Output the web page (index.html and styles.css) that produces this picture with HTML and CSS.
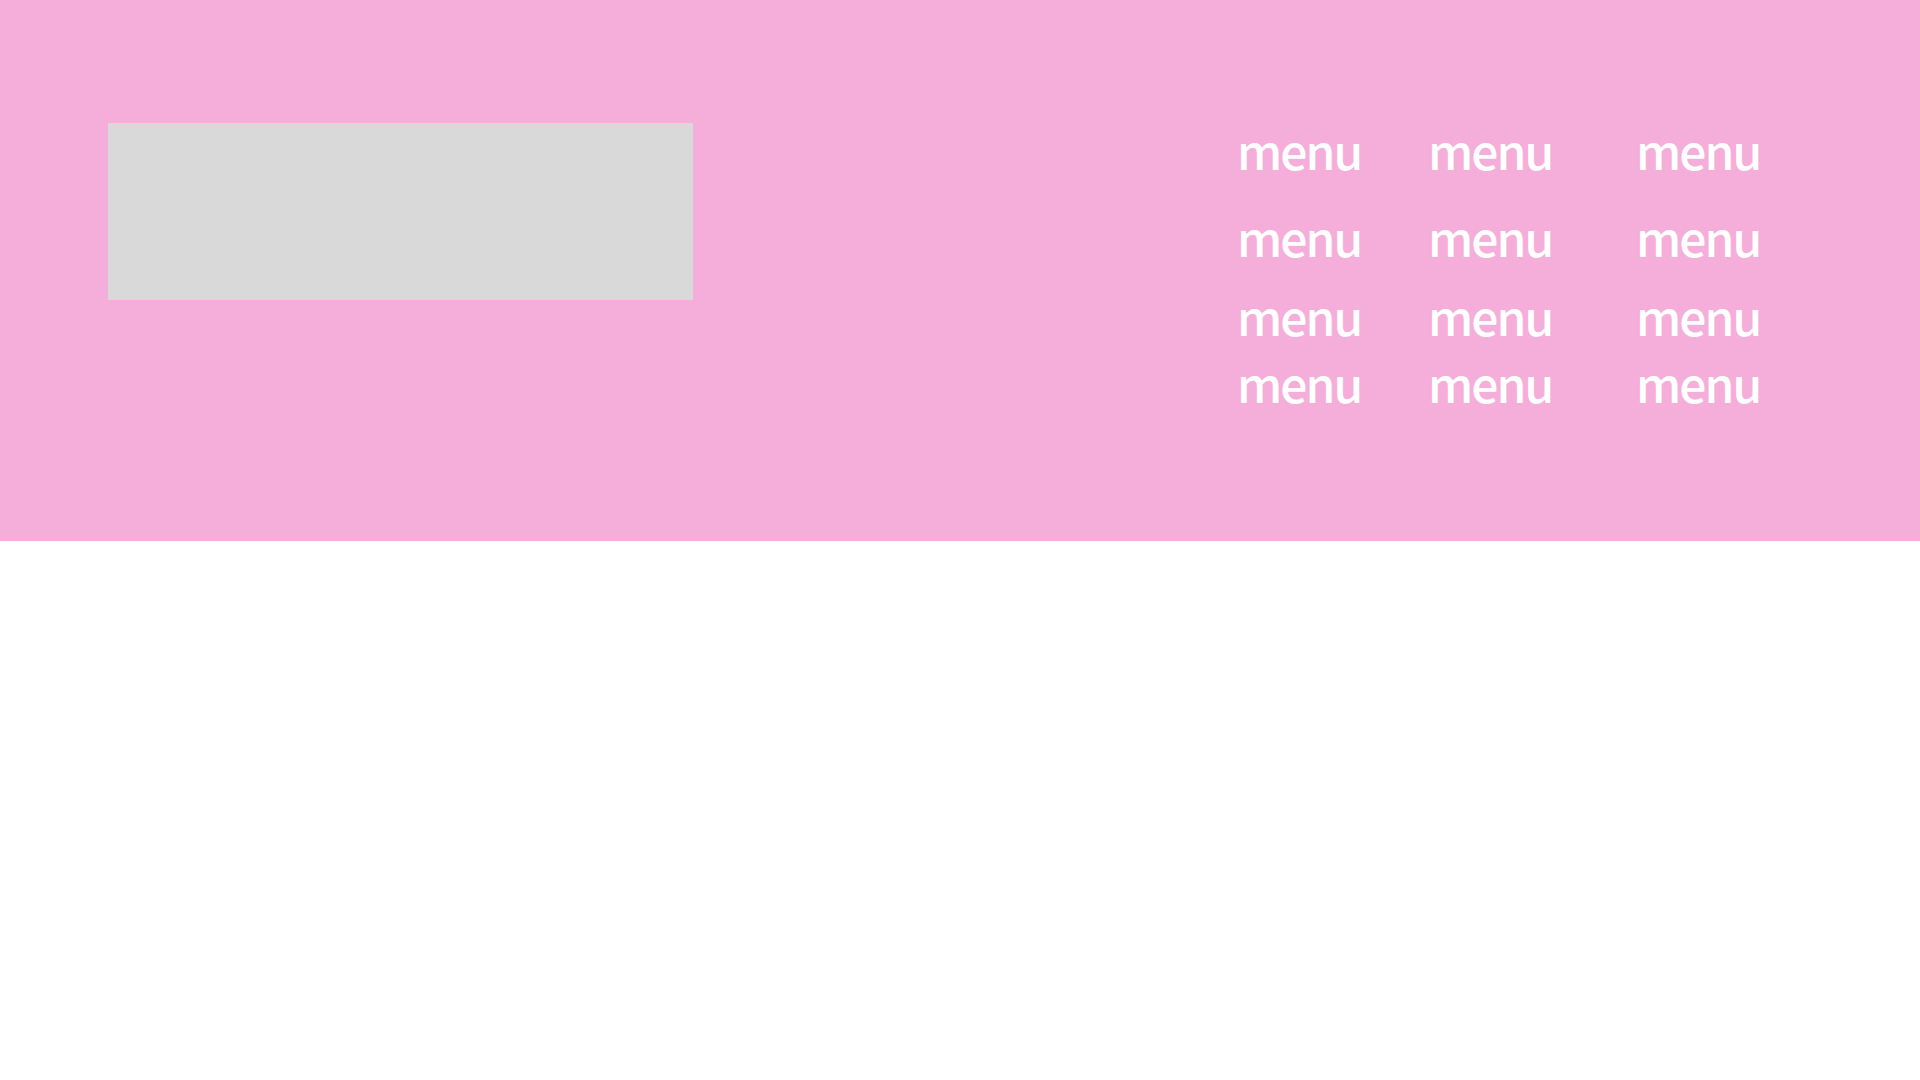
FILE: index.html
```html
<!DOCTYPE html>
<html lang="ja">
<head>
<meta charset="utf-8">
<title>header</title>
<link rel="stylesheet" href="styles.css">
</head>
<body>
<header class="header">
  <div class="logo"></div>
  <nav class="menu">
    <a class="item">menu</a><a class="item">menu</a><a class="item">menu</a>
    <a class="item">menu</a><a class="item">menu</a><a class="item">menu</a>
    <a class="item">menu</a><a class="item">menu</a><a class="item">menu</a>
    <a class="item">menu</a><a class="item">menu</a><a class="item">menu</a>
  </nav>
</header>
</body>
</html>
```
FILE: styles.css
```css
html, body {
  margin: 0;
  padding: 0;
  background: #ffffff;
}
.header {
  box-sizing: border-box;
  height: 541px;
  background: #f5aed9;
  display: flex;
  justify-content: space-between;
  align-items: flex-start;
  padding: 123px 0 0 108px;
}
.logo {
  width: 585px;
  height: 177px;
  background: #d9d9d9;
}
.menu {
  display: grid;
  grid-template-columns: 191px 208px 180px;
  grid-template-rows: 87px 79px 67px 50px;
  margin-right: 104px;
}
.item {
  font-family: "Noto Sans CJK JP", "Noto Sans", sans-serif;
  font-size: 48px;
  font-weight: 500;
  letter-spacing: -2px;
  line-height: 50px;
  padding-top: 1px;
  color: #ffffff;
  height: 50px;
}
```
